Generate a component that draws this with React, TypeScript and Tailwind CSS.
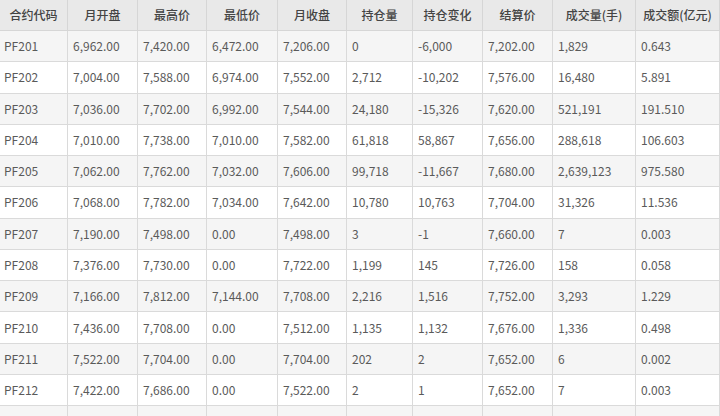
import React from "react";

const cols = [
  "合约代码",
  "月开盘",
  "最高价",
  "最低价",
  "月收盘",
  "持仓量",
  "持仓变化",
  "结算价",
  "成交量(手)",
  "成交额(亿元)",
];

const rows: string[][] = [
  ["PF201", "6,962.00", "7,420.00", "6,472.00", "7,206.00", "0", "-6,000", "7,202.00", "1,829", "0.643"],
  ["PF202", "7,004.00", "7,588.00", "6,974.00", "7,552.00", "2,712", "-10,202", "7,576.00", "16,480", "5.891"],
  ["PF203", "7,036.00", "7,702.00", "6,992.00", "7,544.00", "24,180", "-15,326", "7,620.00", "521,191", "191.510"],
  ["PF204", "7,010.00", "7,738.00", "7,010.00", "7,582.00", "61,818", "58,867", "7,656.00", "288,618", "106.603"],
  ["PF205", "7,062.00", "7,762.00", "7,032.00", "7,606.00", "99,718", "-11,667", "7,680.00", "2,639,123", "975.580"],
  ["PF206", "7,068.00", "7,782.00", "7,034.00", "7,642.00", "10,780", "10,763", "7,704.00", "31,326", "11.536"],
  ["PF207", "7,190.00", "7,498.00", "0.00", "7,498.00", "3", "-1", "7,660.00", "7", "0.003"],
  ["PF208", "7,376.00", "7,730.00", "0.00", "7,722.00", "1,199", "145", "7,726.00", "158", "0.058"],
  ["PF209", "7,166.00", "7,812.00", "7,144.00", "7,708.00", "2,216", "1,516", "7,752.00", "3,293", "1.229"],
  ["PF210", "7,436.00", "7,708.00", "0.00", "7,512.00", "1,135", "1,132", "7,676.00", "1,336", "0.498"],
  ["PF211", "7,522.00", "7,704.00", "0.00", "7,704.00", "202", "2", "7,652.00", "6", "0.002"],
  ["PF212", "7,422.00", "7,686.00", "0.00", "7,522.00", "2", "1", "7,652.00", "7", "0.003"],
  ["", "", "", "", "", "", "", "", "", ""],
];

const grid =
  "grid grid-cols-[68px_70px_69px_71px_69px_66px_70px_70px_83px_84px]";

export default function App() {
  return (
    <div
      className="w-[720px] h-[416px] overflow-hidden bg-white text-[12px]"
      style={{ fontFamily: '"Noto Sans CJK SC", "Noto Sans", sans-serif' }}
    >
      {/* Header */}
      <div className={`${grid} h-[31px] bg-[#e9e9e9] border-b border-[#d6d6d6]`}>
        {cols.map((c, i) => (
          <div
            key={i}
            className="flex items-center justify-center border-r border-[#d6d6d6] text-[#444] font-medium"
          >
            {c}
          </div>
        ))}
      </div>

      {/* Body */}
      {rows.map((r, ri) => (
        <div
          key={ri}
          className={`${grid} h-[31.27px] border-b border-[#dadada] ${
            ri % 2 === 0 ? "bg-[#f5f5f5]" : "bg-white"
          }`}
        >
          {r.map((v, ci) => (
            <div
              key={ci}
              className={`flex items-center border-r border-[#dadada] text-[#5a5a5a] ${
                ci === 0 ? "pl-[4px]" : "pl-[5px]"
              }`}
            >
              {v}
            </div>
          ))}
        </div>
      ))}
    </div>
  );
}
